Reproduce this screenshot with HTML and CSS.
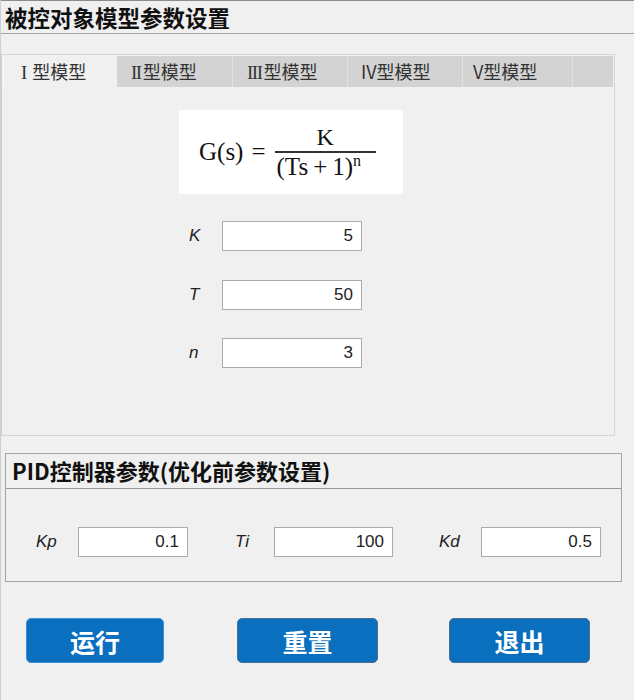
FILE: index.html
```html
<!DOCTYPE html>
<html lang="zh-CN">
<head>
<meta charset="utf-8">
<title>被控对象模型参数设置</title>
<link rel="stylesheet" href="styles.css">
</head>
<body>
<div class="page">
  <div class="title">被控对象模型参数设置</div>

  <div class="panel">
    <div class="tabs">
      <div class="tab active t1"><span class="rn r1">I</span>型模型</div>
      <div class="tab t2"><span class="rn">II</span>型模型</div>
      <div class="tab t3"><span class="rn">III</span>型模型</div>
      <div class="tab t4">IV型模型</div>
      <div class="tab t5">V型模型</div>
      <div class="tab filler"></div>
    </div>

    <div class="formula">
      <span class="lhs">G(s)</span>
      <span class="eq">=</span>
      <span class="frac">
        <span class="num">K</span>
        <span class="den">(Ts<span class="op">+</span>1)<sup>n</sup></span>
      </span>
    </div>

    <div class="params">
      <label class="plabel">K</label>
      <div class="field">5</div>
      <label class="plabel">T</label>
      <div class="field">50</div>
      <label class="plabel">n</label>
      <div class="field">3</div>
    </div>
  </div>

  <div class="pid">
    <div class="pid-head">PID控制器参数(优化前参数设置)</div>
    <div class="pid-body">
      <label class="plabel l1">Kp</label>
      <div class="field">0.1</div>
      <label class="plabel l2">Ti</label>
      <div class="field">100</div>
      <label class="plabel l3">Kd</label>
      <div class="field">0.5</div>
    </div>
  </div>

  <div class="buttons">
    <button class="btn b1">运行</button>
    <button class="btn b2">重置</button>
    <button class="btn b3">退出</button>
  </div>
</div>
</body>
</html>
```

FILE: styles.css
```css
* { box-sizing: border-box; }
html, body {
  margin: 0;
  padding: 0;
  background: #f0f0f0;
}
.page {
  width: 634px;
  height: 700px;
  background: #f0f0f0;
  border-left: 1px solid #cfcfcf;
  font-family: "Liberation Sans", "Noto Sans CJK SC", sans-serif;
  color: #1a1a1a;
  overflow: hidden;
}
.title {
  height: 34px;
  border-top: 1px solid #8c8c8c;
  border-bottom: 1px solid #a5a5a5;
  padding-left: 4px;
  font-family: "Noto Sans CJK SC", sans-serif;
  font-weight: 700;
  font-size: 22.5px;
  line-height: 32px;
  color: #111;
}
.panel {
  margin-top: 20px;
  width: 614px;
  height: 382px;
  border: 1px solid #d6d6d6;
  border-left-color: #cfcfcf;
  background: #f0f0f0;
}
.tabs {
  display: flex;
  height: 31px;
  margin: 1px 0 0 1px;
  width: 610px;
  background: #d3d3d3;
}
.tab {
  height: 31px;
  padding-left: 14px;
  font-family: "Noto Sans CJK SC", sans-serif;
  font-size: 18px;
  line-height: 31px;
  color: #333;
  border-right: 1px solid #e2e2e2;
  white-space: nowrap;
}
.tab.active {
  background: #f0f0f0;
  padding-left: 17px;
  border-left: 1px solid #fafafa;
  border-right: none;
}
.rn {
  font-family: "Liberation Serif", serif;
  font-size: 19px;
  letter-spacing: -1.5px;
  margin-right: 2px;
}
.rn.r1 { margin-right: 5px; letter-spacing: 0; }
.t1 { width: 114px; }
.t2 { width: 116px; }
.t3 { width: 115px; }
.t4 { width: 115px; padding-left: 13px; }
.t5 { width: 110px; padding-left: 10px; }
.filler { flex: 1; border-right: none; }

.formula {
  margin: 23px 0 0 177px;
  width: 224px;
  height: 84px;
  background: #fff;
  display: flex;
  align-items: center;
  padding-left: 20px;
  font-family: "Liberation Serif", serif;
  font-size: 25px;
  color: #111;
}
.lhs { margin-right: 8px; }
.eq { margin-right: 9px; font-size: 25px; }
.frac {
  display: inline-flex;
  flex-direction: column;
  align-items: flex-start;
  width: 101px;
}
.num {
  display: block;
  width: 100%;
  text-align: center;
  line-height: 25px;
  border-bottom: 2px solid #333;
  padding-bottom: 1px;
  font-size: 24px;
}
.den {
  display: block;
  line-height: 27px;
  padding-left: 2px;
  white-space: nowrap;
}
.op { margin: 0 5px; }
.den sup { font-size: 16px; vertical-align: 9px; line-height: 0; }

.params {
  display: grid;
  grid-template-columns: 33px 140px;
  row-gap: 28.5px;
  margin: 27px 0 0 187px;
}
.plabel {
  font-family: "Liberation Sans", sans-serif;
  font-style: italic;
  font-size: 17px;
  line-height: 30px;
  color: #222;
}
.field {
  height: 30px;
  background: #fff;
  border: 1px solid #ababab;
  text-align: right;
  padding-right: 8px;
  font-family: "Liberation Sans", sans-serif;
  font-size: 17px;
  line-height: 28px;
  color: #222;
}

.pid {
  margin: 17px 0 0 4px;
  width: 617px;
  height: 129px;
  border: 1px solid #a3a3a3;
}
.pid-head {
  height: 35px;
  border-bottom: 1px solid #9a9a9a;
  padding-left: 6px;
  font-family: "Noto Sans CJK SC", sans-serif;
  font-weight: 700;
  font-size: 22px;
  line-height: 33px;
  color: #111;
}
.pid-body {
  display: grid;
  grid-template-columns: 42px 110px 86px 119px 88px 120px;
  padding: 38px 0 0 30px;
}
.l2 { padding-left: 47px; }
.l3 { padding-left: 46px; }

.buttons {
  display: flex;
  margin-top: 36px;
  padding-left: 25px;
}
.btn {
  height: 45px;
  border: 1px solid #3d8fd6;
  border-radius: 5px;
  background: #0a6fbe;
  color: #fff;
  font-family: "Noto Sans CJK SC", sans-serif;
  font-weight: 700;
  font-size: 25px;
  line-height: 40px;
  padding: 0;
}
.b1 { width: 138px; }
.b2 { width: 141px; margin-left: 73px; border-color: #4a6f93; }
.b3 { width: 141px; margin-left: 71px; border-color: #4a6f93; }
```
